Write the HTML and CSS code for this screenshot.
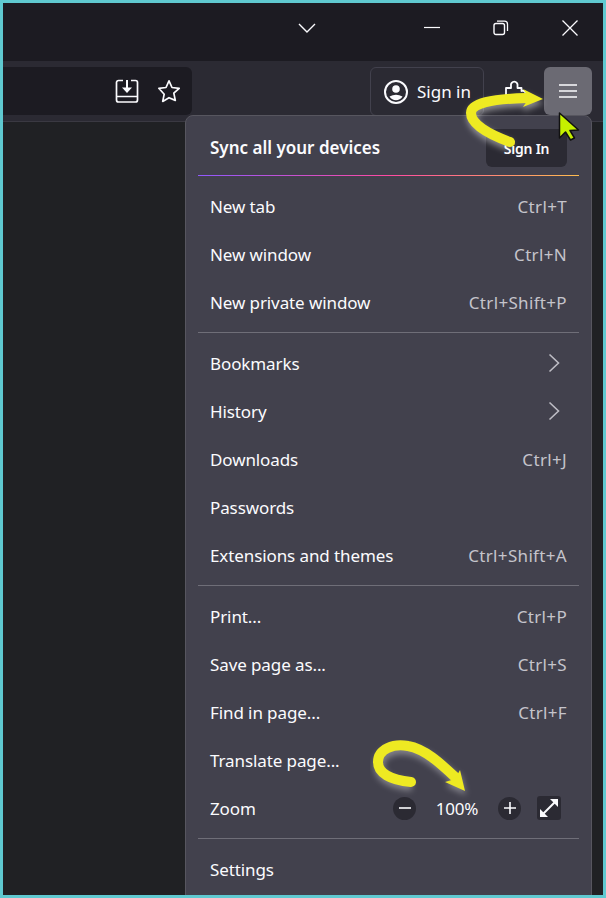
FILE: index.html
```html
<!DOCTYPE html>
<html lang="en">
<head>
<meta charset="utf-8">
<title>Firefox menu</title>
<link rel="stylesheet" href="styles.css">
</head>
<body>
<div class="frame">
  <header class="titlebar">
    <svg class="tabs-chevron" width="20" height="12" viewBox="0 0 20 12"><path d="M2 2l8 8 8-8" fill="none" stroke="#fbfbfe" stroke-width="1.4"/></svg>
    <div class="winctl">
      <svg width="16" height="16" viewBox="0 0 16 16"><path d="M0 7.500h16" stroke="#fbfbfe" stroke-width="1.200"/></svg>
      <svg width="16" height="16" viewBox="0 0 16 16"><rect x="1" y="3.500" width="10.500" height="11" rx="2" fill="none" stroke="#fbfbfe" stroke-width="1.400"/><path d="M4 1.200h7.500a3 3 0 0 1 3 3V11" fill="none" stroke="#fbfbfe" stroke-width="1.300"/></svg>
      <svg width="16" height="16" viewBox="0 0 16 16"><path d="M.5.5l15 15M15.500.5l-15 15" stroke="#fbfbfe" stroke-width="1.300"/></svg>
    </div>
  </header>
  <div class="toolbar">
    <div class="urlbar">
      <svg width="24" height="24" viewBox="0 0 24 24"><path d="M8 1.500H3.500a2 2 0 0 0-2 2V21a2 2 0 0 0 2 2h17a2 2 0 0 0 2-2V3.500a2 2 0 0 0-2-2H16M1.500 17.500h21" fill="none" stroke="#fbfbfe" stroke-width="1.700"/><path d="M12 1v8" stroke="#fbfbfe" stroke-width="2"/><path d="M7 8.500h10L12 14z" fill="#fbfbfe"/></svg>
      <svg width="24" height="24" viewBox="0 0 24 24"><path d="M12 1.800l3 6.700 7.200.8-5.400 4.900 1.500 7.200L12 18.700l-6.300 3.700 1.500-7.200L1.800 9.300 9 8.500z" fill="none" stroke="#fbfbfe" stroke-width="1.700" stroke-linejoin="round"/></svg>
    </div>
    <div class="tools">
      <div class="signin-btn">
        <svg width="24" height="24" viewBox="0 0 24 24"><circle cx="12" cy="12" r="11" fill="none" stroke="#fbfbfe" stroke-width="2"/><circle cx="12" cy="9" r="3.800" fill="#fbfbfe"/><path d="M5.500 16.500q6.500-3.500 13 0q-2.500 3.800-6.500 3.800t-6.500-3.800z" fill="#fbfbfe"/></svg>
        <span>Sign in</span>
      </div>
      <svg class="puzzle" width="22" height="22" viewBox="0 0 22 22"><path d="M2 9h5V6.500a3.300 3.300 0 1 1 6.500 0V9h4v3a3 3 0 1 1 0 5.500V21H2z" fill="none" stroke="#fbfbfe" stroke-width="1.800" stroke-linejoin="round"/></svg>
      <div class="hamburger">
        <svg width="18" height="14" viewBox="0 0 18 14"><path d="M0 1h18M0 7h18M0 13h18" stroke="#fbfbfe" stroke-width="1.700"/></svg>
      </div>
    </div>
  </div>
  <main class="content"></main>

  <nav class="menu">
    <div class="sync-row">
      <strong>Sync all your devices</strong>
      <span class="sync-btn">Sign In</span>
    </div>
    <div class="sep sep-gradient"></div>
    <div class="group">
      <div class="item"><span>New tab</span><kbd>Ctrl+T</kbd></div>
      <div class="item"><span>New window</span><kbd>Ctrl+N</kbd></div>
      <div class="item"><span>New private window</span><kbd>Ctrl+Shift+P</kbd></div>
    </div>
    <div class="sep"></div>
    <div class="group">
      <div class="item"><span>Bookmarks</span><svg class="chev" width="12" height="20" viewBox="0 0 12 20"><path d="M1.500 1.500l9 8.500-9 8.500" fill="none" stroke="#bdbcc4" stroke-width="1.600"/></svg></div>
      <div class="item"><span>History</span><svg class="chev" width="12" height="20" viewBox="0 0 12 20"><path d="M1.500 1.500l9 8.500-9 8.500" fill="none" stroke="#bdbcc4" stroke-width="1.600"/></svg></div>
      <div class="item"><span>Downloads</span><kbd>Ctrl+J</kbd></div>
      <div class="item"><span>Passwords</span></div>
      <div class="item"><span>Extensions and themes</span><kbd>Ctrl+Shift+A</kbd></div>
    </div>
    <div class="sep"></div>
    <div class="group">
      <div class="item"><span>Print...</span><kbd>Ctrl+P</kbd></div>
      <div class="item"><span>Save page as...</span><kbd>Ctrl+S</kbd></div>
      <div class="item"><span>Find in page...</span><kbd>Ctrl+F</kbd></div>
      <div class="item"><span>Translate page...</span></div>
      <div class="item zoom-row">
        <span>Zoom</span>
        <div class="zoom-ctl">
          <span class="round"><svg width="12" height="12" viewBox="0 0 12 12"><path d="M0 6h12" stroke="#fbfbfe" stroke-width="1.600"/></svg></span>
          <span class="pct">100%</span>
          <span class="round"><svg width="12" height="12" viewBox="0 0 12 12"><path d="M0 6h12M6 0v12" stroke="#fbfbfe" stroke-width="1.600"/></svg></span>
          <span class="full"><svg width="18" height="18" viewBox="0 0 18 18"><path d="M3 15L15 3" stroke="#fbfbfe" stroke-width="2"/><path d="M10 0h8v8zM0 10v8h8z" fill="#fbfbfe"/></svg></span>
        </div>
      </div>
    </div>
    <div class="sep"></div>
    <div class="group">
      <div class="item"><span>Settings</span></div>
    </div>
  </nav>

  <svg class="annot annot-top" width="140" height="90" viewBox="0 0 140 90">
    <defs><filter id="glow" x="-20%" y="-20%" width="140%" height="140%"><feGaussianBlur stdDeviation="3"/></filter></defs>
    <g filter="url(#glow)" opacity=".45" transform="translate(1 4)">
      <path d="M60 62C38 54 21 44 21 33 21 23 42 19 76 18" fill="none" stroke="#fff" stroke-width="10"/>
      <path d="M73 9L93 19 73 27z" fill="#fff"/>
    </g>
    <path d="M60 62C38 54 21 44 21 33 21 23 42 19 76 18" fill="none" stroke="#eeea22" stroke-width="10" stroke-linecap="round"/>
    <path d="M73 9L93 19 73 27 79 18z" fill="#eeea22"/>
  </svg>
  <svg class="annot annot-zoom" width="110" height="70" viewBox="0 0 110 70">
    <g filter="url(#glow)" opacity=".35" transform="translate(1 4)">
      <path d="M41 47C20 45 8 38 8 27 8 14 24 8 38 11 55 14 70 28 85 40" fill="none" stroke="#fff" stroke-width="10"/>
      <path d="M90 35L95 56 75 47z" fill="#fff"/>
    </g>
    <path d="M41 47C20 45 8 38 8 27 8 14 24 8 38 11 55 14 70 28 85 42" fill="none" stroke="#eeea22" stroke-width="10" stroke-linecap="round"/>
    <path d="M90 35L95 56 75 47 85 44z" fill="#eeea22"/>
  </svg>
  <svg class="annot annot-cursor" width="22" height="30" viewBox="0 0 22 30"><path d="M1.500 1v25l6-6 5 8 4-2-4.500-7.500 8.500-.5z" fill="#c6f000" stroke="#111" stroke-width="1.500" stroke-linejoin="round"/></svg>
</div>
</body>
</html>
```
FILE: styles.css
```css
* { box-sizing: border-box; }
html, body { margin: 0; padding: 0; }
body { width: 606px; height: 898px; overflow: hidden; background: #5fc9d0; }

.frame {
  position: relative;
  width: 606px;
  height: 898px;
  border: 3px solid #5fc9d0;
  display: flex;
  flex-direction: column;
  overflow: hidden;
  font-family: "Noto Sans", "Open Sans", sans-serif;
  color: #fbfbfe;
}

.titlebar {
  height: 58px;
  flex: none;
  background: #1c1b22;
  display: flex;
  align-items: center;
  justify-content: flex-end;
  padding: 0 25px 9px 0;
}
.tabs-chevron { margin-right: 107px; }
.winctl { display: flex; gap: 53px; align-items: center; }

.toolbar {
  height: 61px;
  flex: none;
  background: #2b2a33;
  border-bottom: 1px solid #3a3942;
  display: flex;
  align-items: flex-start;
  justify-content: space-between;
  padding: 6px 11px 0 0;
}
.urlbar {
  width: 189px;
  height: 48px;
  background: #1c1b22;
  border-radius: 0 6px 6px 0;
  display: flex;
  justify-content: flex-end;
  align-items: center;
  gap: 18px;
  padding: 0 11px 0 0;
}
.tools { display: flex; align-items: flex-start; }
.signin-btn {
  width: 114px;
  height: 49px;
  border: 1px solid #42414d;
  border-radius: 6px;
  display: flex;
  align-items: center;
  gap: 9px;
  padding: 0 0 0 13px;
  font-size: 17px;
}
.puzzle { margin: 12px 0 0 20px; }
.hamburger {
  width: 48px;
  height: 48px;
  margin-left: 18px;
  border-radius: 6px;
  background: #6b6a73;
  display: flex;
  align-items: center;
  justify-content: center;
}

.content { flex: 1; background: #202124; }

.menu {
  position: absolute;
  left: 182px;
  top: 112px;
  width: 407px;
  height: 790px;
  background: #42414d;
  border: 1px solid #57565f;
  border-radius: 8px;
  padding: 0 12px;
  font-size: 17px;
}
.sync-row {
  height: 59px;
  display: flex;
  align-items: center;
  justify-content: space-between;
  padding: 3px 12px 0 12px;
}
.sync-row strong { font-weight: 600; font-size: 17px; }
.sync-btn {
  width: 81px;
  height: 38px;
  margin-top: 2px;
  background: #2b2a33;
  border-radius: 6px;
  font-size: 14px;
  font-weight: 600;
  letter-spacing: -.2px;
  display: flex;
  align-items: center;
  justify-content: center;
}
.sep { height: 1px; background: #6f6e78; }
.sep-gradient { background: linear-gradient(90deg, #9059ff, #ff4aa2 50%, #ffbd4f); }
.group { padding: 6px 0; }
.item {
  height: 48px;
  display: flex;
  align-items: center;
  justify-content: space-between;
  padding: 0 12px;
  color: #fbfbfe;
  white-space: nowrap;
  letter-spacing: -.1px;
}
.item kbd {
  font: inherit;
  color: #c5c4cb;
  letter-spacing: .33px;
}
.chev { margin-right: 7px; }
.zoom-ctl { display: flex; align-items: center; }
.round {
  width: 23px;
  height: 23px;
  border-radius: 50%;
  background: #2b2a33;
  display: flex;
  align-items: center;
  justify-content: center;
}
.pct { width: 82px; text-align: center; font-size: 17px; letter-spacing: -.2px; }
.full {
  width: 24px;
  height: 24px;
  margin-left: 16px;
  margin-right: 6px;
  background: #2b2a33;
  border-radius: 3px;
  display: flex;
  align-items: center;
  justify-content: center;
}

.annot { position: absolute; pointer-events: none; }
.annot-top { left: 447px; top: 77px; }
.annot-zoom { left: 367px; top: 732px; }
.annot-cursor { left: 555px; top: 109px; }
```
